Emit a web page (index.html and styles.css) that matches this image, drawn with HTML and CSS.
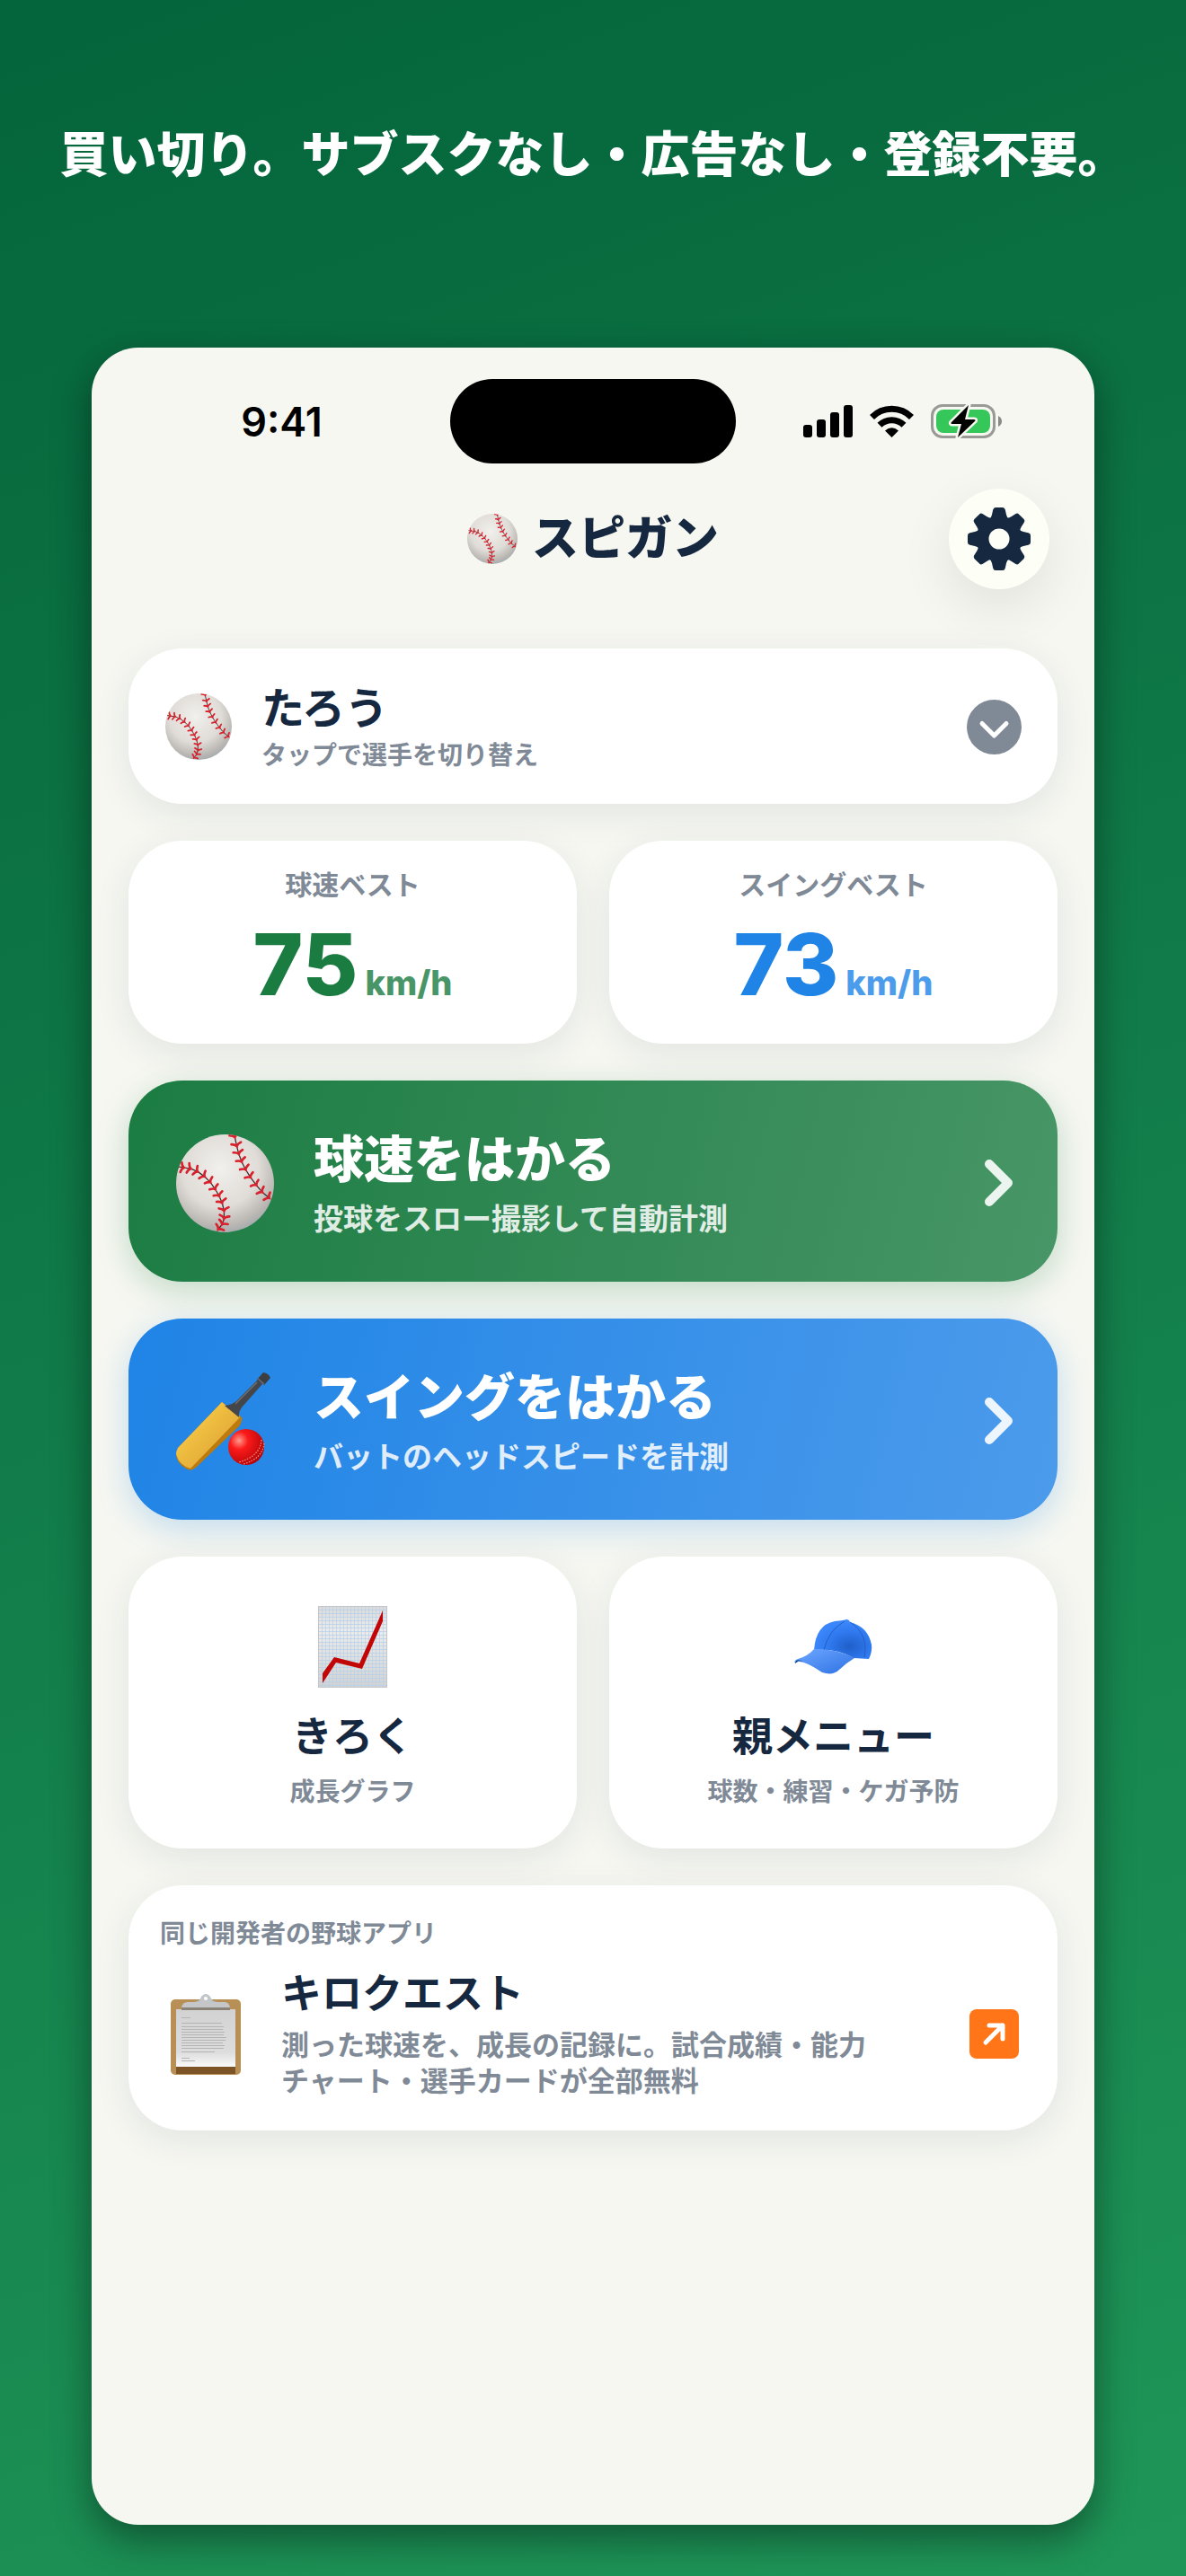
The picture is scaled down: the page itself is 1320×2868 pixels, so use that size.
FILE: index.html
```html
<!DOCTYPE html>
<html lang="ja">
<head>
    <meta charset="UTF-8">
    <meta name="viewport" content="width=device-width, initial-scale=1.0">
    <title>スピガン</title>
    <link rel="stylesheet" href="styles.css">
</head>
<body>
    <!-- Shared icons -->
    <svg class="sprite" width="0" height="0" aria-hidden="true">
        <defs>
            <radialGradient id="ballFill" cx="45%" cy="35%" r="65%">
                <stop offset="0" stop-color="#f1f0ed"/>
                <stop offset="0.6" stop-color="#e0dcd7"/>
                <stop offset="0.88" stop-color="#bdb9b5"/>
                <stop offset="1" stop-color="#a9adae"/>
            </radialGradient>
            <clipPath id="ballClip"><circle cx="50" cy="50" r="50"/></clipPath>
            <marker id="stitch" viewBox="-6 -6 12 12" markerWidth="12" markerHeight="12" markerUnits="userSpaceOnUse" orient="auto" overflow="visible">
                <path d="M-3-5Q-2-1 0 0Q-2 1-3 5" fill="none" stroke="#d9202c" stroke-width="2.4" stroke-linecap="round"/>
            </marker>
        </defs>
        <symbol id="icon-ball" viewBox="0 0 100 100">
            <circle cx="50" cy="50" r="50" fill="url(#ballFill)"/>
            <g clip-path="url(#ballClip)" fill="none" stroke="#3c3030" stroke-width="1.2" marker-start="url(#stitch)" marker-mid="url(#stitch)" marker-end="url(#stitch)">
                <path d="M2 33L8 34L15 35L22 38L29 43L35 49L40 56L44 63L47 70L49 78L49 86L47 92L43 97"/>
                <path d="M60 3L62 12L64 20L67 28L71 36L76 44L82 52L88 59L95 65"/>
            </g>
        </symbol>
        <symbol id="icon-chevron" viewBox="0 0 32 52">
            <path d="M5 5L26 26L5 47" fill="none" stroke="currentColor" stroke-width="10" stroke-linecap="round" stroke-linejoin="round"/>
        </symbol>
    </svg>

    <h1 class="headline">買い切り。サブスクなし・広告なし・登録不要。</h1>

    <main class="phone">
        <!-- Status bar -->
        <div class="status-bar">
            <span class="status-time">9:41</span>
            <span class="island"></span>
            <div class="status-icons">
                <svg width="55" height="36" viewBox="0 0 55 36">
                    <rect x="0" y="22" width="10" height="14" rx="3"/>
                    <rect x="15" y="16" width="10" height="20" rx="3"/>
                    <rect x="30" y="8" width="10" height="28" rx="3"/>
                    <rect x="45" y="0" width="10" height="36" rx="3"/>
                </svg>
                <svg width="49" height="36" viewBox="0 0 49 36">
                    <g fill="none" stroke="#000" stroke-width="7">
                        <path d="M2.500 13.500A31 31 0 0 1 46.500 13.500"/>
                        <path d="M11 22.300A19 19 0 0 1 38 22.300"/>
                    </g>
                    <path d="M17 28.500Q24.500 22 32 28.500L24.500 36Z"/>
                </svg>
                <svg width="80" height="38" viewBox="0 0 80 38">
                    <rect x="1.500" y="1.500" width="69" height="35" rx="11.500" fill="none" stroke="#999a95" stroke-width="3"/>
                    <rect x="6" y="6" width="60" height="26" rx="8" fill="#35c759"/>
                    <path d="M75 13Q79 15 79 19T75 25Z" fill="#8a8b86"/>
                    <path d="M42 1L22.500 20.500Q22 22 24 22H34L30 37L49.500 18.500Q50 17 48 17H38Z" fill="#000" stroke="#f6f7f1" stroke-width="5" paint-order="stroke" stroke-linejoin="round"/>
                </svg>
            </div>
        </div>

        <!-- App header -->
        <header class="app-header">
            <h2 class="app-title">
                <svg class="title-ball" aria-hidden="true"><use href="#icon-ball"/></svg>
                スピガン
            </h2>
            <button class="settings-btn" aria-label="設定">
                <svg width="70" height="70" viewBox="-35 -35 70 70" fill="#16283f">
                    <defs>
                        <path id="tooth" d="M-11-22Q-8.500-24-8-27L-6.800-32.500Q-6.200-35-4-35H4Q6.200-35 6.800-32.500L8-27Q8.500-24 11-22Z"/>
                    </defs>
                    <path fill-rule="evenodd" d="M0-24.500A24.500 24.500 0 1 1 0 24.500A24.500 24.500 0 1 1 0-24.500ZM0-11.500A11.500 11.500 0 1 0 0 11.500A11.500 11.500 0 1 0 0-11.500Z"/>
                    <use href="#tooth"/>
                    <use href="#tooth" transform="rotate(45)"/>
                    <use href="#tooth" transform="rotate(90)"/>
                    <use href="#tooth" transform="rotate(135)"/>
                    <use href="#tooth" transform="rotate(180)"/>
                    <use href="#tooth" transform="rotate(225)"/>
                    <use href="#tooth" transform="rotate(270)"/>
                    <use href="#tooth" transform="rotate(315)"/>
                </svg>
            </button>
        </header>

        <div class="content">
            <!-- Player switcher -->
            <button class="card player-card">
                <svg class="player-ball" aria-hidden="true"><use href="#icon-ball"/></svg>
                <span class="player-text">
                    <span class="player-name">たろう</span>
                    <span class="note">タップで選手を切り替え</span>
                </span>
                <svg width="61" height="61" viewBox="0 0 61 61">
                    <circle cx="30.500" cy="30.500" r="30.500" fill="#808a97"/>
                    <path d="M17 26.500L30.500 40L44 26.500" fill="none" stroke="#fff" stroke-width="5" stroke-linecap="round" stroke-linejoin="round"/>
                </svg>
            </button>

            <!-- Best records -->
            <div class="grid">
                <section class="card stat-card stat-pitch">
                    <h3 class="stat-label">球速ベスト</h3>
                    <p class="stat-value">75<span class="unit">km/h</span></p>
                </section>
                <section class="card stat-card stat-swing">
                    <h3 class="stat-label">スイングベスト</h3>
                    <p class="stat-value">73<span class="unit">km/h</span></p>
                </section>
            </div>

            <!-- Measure actions -->
            <button class="action-card action-pitch">
                <svg class="action-icon" aria-hidden="true"><use href="#icon-ball"/></svg>
                <span class="action-text">
                    <span class="action-title">球速をはかる</span>
                    <span class="action-sub">投球をスロー撮影して自動計測</span>
                </span>
                <svg class="chevron" aria-hidden="true"><use href="#icon-chevron"/></svg>
            </button>
            <button class="action-card action-swing">
                <svg class="action-icon" viewBox="0 0 109 109" aria-hidden="true">
                    <defs>
                        <linearGradient id="bladeFill" x1="0" y1="0" x2="1" y2="1">
                            <stop offset="0.3" stop-color="#f3c544"/>
                            <stop offset="0.62" stop-color="#e6b03a"/>
                            <stop offset="0.75" stop-color="#b87508"/>
                        </linearGradient>
                        <radialGradient id="redBall" cx="30%" cy="32%" r="72%">
                            <stop offset="0" stop-color="#ff9a8c"/>
                            <stop offset="0.35" stop-color="#fb1a1a"/>
                            <stop offset="1" stop-color="#b80608"/>
                        </radialGradient>
                    </defs>
                    <path d="M51 33L73 50Q74 54 71 59L23 105Q17 111 11 107Q2 102 0 93Q0 88 2 84Z" fill="#bd7a0d"/>
                    <path d="M51 33L71 50L16 107Q3 103 0 91Q0 88 2 84Z" fill="url(#bladeFill)"/>
                    <path d="M54 37Q62 36 67 32L91 8L96 13L73 39Q69 44 70 50Z" fill="#45464a"/>
                    <path d="M97 0Q103 1 105 6L98 14L90 8Z" fill="#3d3e41"/>
                    <path d="M91 7L98 13M66 35L90 11" stroke="#6d6e72" stroke-width="1.500"/>
                    <circle cx="78" cy="83" r="20" fill="url(#redBall)"/>
                    <path d="M95 75Q94 93 70 100M98 79Q96 96 75 102" fill="none" stroke="#f5938c" stroke-width="1.200" stroke-dasharray="1.500 1.500"/>
                </svg>
                <span class="action-text">
                    <span class="action-title">スイングをはかる</span>
                    <span class="action-sub">バットのヘッドスピードを計測</span>
                </span>
                <svg class="chevron" aria-hidden="true"><use href="#icon-chevron"/></svg>
            </button>

            <!-- Menu -->
            <div class="grid">
                <button class="card menu-card">
                    <svg width="77" height="91" viewBox="0 0 77 91" aria-hidden="true">
                        <defs>
                            <pattern id="gridLines" width="4" height="4" patternUnits="userSpaceOnUse">
                                <path d="M0 0H4M0 0V4" stroke="#b5d2ea" stroke-width="1.400"/>
                            </pattern>
                            <linearGradient id="sheet" x1="0" y1="0" x2="0" y2="1">
                                <stop offset="0" stop-color="#dadada"/>
                                <stop offset="0.3" stop-color="#ececec"/>
                                <stop offset="1" stop-color="#d2d2d2"/>
                            </linearGradient>
                        </defs>
                        <rect width="77" height="91" fill="url(#sheet)"/>
                        <rect width="77" height="91" fill="url(#gridLines)"/>
                        <rect x="0.500" y="0.500" width="76" height="90" fill="none" stroke="#c3c5c7"/>
                        <path d="M5 75L18 57L46 64L72 5V17L49 70L20 63L5 86Z" fill="#c20505"/>
                    </svg>
                    <span class="menu-title">きろく</span>
                    <span class="note">成長グラフ</span>
                </button>
                <button class="card menu-card">
                    <svg width="87" height="91" viewBox="0 -15 87 91" aria-hidden="true">
                        <defs>
                            <radialGradient id="crown" cx="62%" cy="68%" r="60%">
                                <stop offset="0" stop-color="#1f5fc9"/>
                                <stop offset="0.6" stop-color="#2f78ee"/>
                                <stop offset="1" stop-color="#3b86fa"/>
                            </radialGradient>
                            <linearGradient id="brim" x1="0" y1="0" x2="1" y2="1">
                                <stop offset="0.2" stop-color="#629dfb"/>
                                <stop offset="0.8" stop-color="#3a7ce8"/>
                            </linearGradient>
                        </defs>
                        <path d="M22 34Q24 6 45 2Q56 1 58 0Q61 0 62 3Q82 8 86 28Q87 36 83 44L66 43Q48 32 22 34Z" fill="url(#crown)"/>
                        <path d="M33 34Q38 12 56 2M78 42Q83 16 62 3" fill="none" stroke="#2260c4" stroke-width="1"/>
                        <path d="M22 33Q46 32 67 43Q57 49 50 56Q43 63 31 59Q12 46 4 47L1 49Q-1 46 4 44Q15 41 22 33Z" fill="url(#brim)"/>
                        <path d="M1 49L2 46Q5 44 10 47L5 46Z" fill="#174890"/>
                    </svg>
                    <span class="menu-title">親メニュー</span>
                    <span class="note">球数・練習・ケガ予防</span>
                </button>
            </div>

            <!-- Sister app -->
            <a class="card promo-card" href="#">
                <span class="note">同じ開発者の野球アプリ</span>
                <span class="promo-row">
                    <span class="promo-icon">
                        <svg width="78" height="90" viewBox="0 0 78 90" aria-hidden="true">
                            <defs>
                                <linearGradient id="paper" x1="0" y1="0" x2="0" y2="1">
                                    <stop offset="0" stop-color="#d2d2d2"/>
                                    <stop offset="0.75" stop-color="#dddddd"/>
                                    <stop offset="1" stop-color="#fafafa"/>
                                </linearGradient>
                            </defs>
                            <rect x="0" y="6" width="78" height="84" rx="5" fill="#b88f55"/>
                            <rect x="6" y="80" width="66" height="9" fill="#7c5426"/>
                            <rect x="6" y="17" width="66" height="64" fill="url(#paper)"/>
                            <g stroke="#b4b4b4" stroke-width="1">
                                <path d="M12 26.500H22M12 32.500H57M12 36.500H59M12 39.500H58M12 42.500H60M12 45.500H59M12 48.500H62M12 51.500H61M12 54.500H58M12 57.500H60M12 60.500H59M12 64.500H49M12 71.500H21M12 74.500H27"/>
                            </g>
                            <path d="M26 9Q33 8 34 3Q39-3 44 3Q45 8 52 9Z" fill="#b3bfcb"/>
                            <path d="M12 15Q13 9 19 9H31Q34 7 34 4Q39-3 44 4Q44 7 47 9H60Q65 9 66 15V16H12Z" fill="#c4c6c8"/>
                            <rect x="12" y="15" width="54" height="3" fill="#8b8278"/>
                            <circle cx="39" cy="5" r="2" fill="#fff"/>
                        </svg>
                    </span>
                    <span class="promo-text">
                        <span class="promo-title">キロクエスト</span>
                        <span class="promo-desc">測った球速を、成長の記録に。試合成績・能力<br>チャート・選手カードが全部無料</span>
                    </span>
                    <svg width="55" height="55" viewBox="0 0 55 55" aria-hidden="true">
                        <rect width="55" height="55" rx="8" fill="#ff7518"/>
                        <path d="M18 37L37 18M22 18H37V33" fill="none" stroke="#fff" stroke-width="5" stroke-linecap="round" stroke-linejoin="round"/>
                    </svg>
                </span>
            </a>
        </div>
    </main>
</body>
</html>
```
FILE: styles.css
```css
* {
    margin: 0;
    padding: 0;
    box-sizing: border-box;
}

body {
    display: flex;
    flex-direction: column;
    min-height: 100vh;
    padding: 133px 102px 57px;
    background: linear-gradient(160deg, #04643b 0%, #1f9658 100%);
    color: #16283f;
    font-family: Inter, "Noto Sans CJK JP", sans-serif;
}

button {
    border: none;
    color: inherit;
    font: inherit;
    cursor: pointer;
}

a {
    color: inherit;
    text-decoration: none;
}

svg {
    display: block;
    flex-shrink: 0;
}

.sprite {
    position: absolute;
}

.headline {
    margin: 0 -40px 174px;
    color: #fff;
    font-size: 54px;
    font-weight: 900;
    line-height: 80px;
    text-align: center;
    white-space: nowrap;
}

.phone {
    flex: 1;
    padding-top: 35px;
    background: #f6f7f1;
    border-radius: 52px;
    box-shadow: 0 16px 44px rgba(0, 0, 0, 0.42);
}

/* Status bar */
.status-bar {
    display: grid;
    grid-template-columns: 1fr 318px 1fr;
    align-items: center;
    color: #000;
}

.status-time {
    padding-left: 24px;
    font-size: 45px;
    font-weight: 600;
    text-align: center;
}

.island {
    height: 94px;
    background: #000;
    border-radius: 47px;
}

.status-icons {
    display: flex;
    justify-content: center;
    align-items: center;
    gap: 19px;
    padding-right: 28px;
}

/* App header */
.app-header {
    display: grid;
    grid-template-columns: 1fr auto 1fr;
    align-items: center;
    margin: 28px 50px 66px;
}

.app-title {
    grid-column: 2;
    display: flex;
    align-items: center;
    gap: 16px;
    font-size: 52px;
    font-weight: 800;
    line-height: 76px;
}

.title-ball {
    width: 56px;
    height: 56px;
}

.settings-btn {
    justify-self: end;
    display: flex;
    align-items: center;
    justify-content: center;
    width: 112px;
    height: 112px;
    background: #fdfff7;
    border-radius: 50%;
    box-shadow: 0 20px 60px rgba(0, 0, 0, 0.09);
}

/* Cards */
.content {
    display: flex;
    flex-direction: column;
    gap: 41px;
    padding: 0 41px 41px;
}

.grid {
    display: grid;
    grid-template-columns: 1fr 1fr;
    gap: 36px;
}

.card {
    background: #fff;
    border-radius: 60px;
    box-shadow: 0 10px 40px rgba(22, 40, 63, 0.09);
}

.note {
    color: #808a97;
    font-size: 28px;
    font-weight: 600;
    line-height: 36px;
}

.player-card {
    display: flex;
    align-items: center;
    gap: 33px;
    padding: 37px 40px 36px 41px;
    text-align: left;
}

.player-ball {
    width: 74px;
    height: 74px;
}

.player-text {
    flex: 1;
    display: flex;
    flex-direction: column;
    gap: 4px;
}

.player-name {
    font-size: 48px;
    font-weight: 700;
    line-height: 60px;
}

.stat-card {
    display: flex;
    flex-direction: column;
    align-items: center;
    gap: 21px;
    padding: 29px 20px 40px;
}

.stat-label {
    color: #808a97;
    font-size: 30px;
    font-weight: 600;
    line-height: 40px;
}

.stat-value {
    display: flex;
    align-items: baseline;
    gap: 8px;
    font-size: 95px;
    font-weight: 800;
    line-height: 96px;
}

.unit {
    font-size: 38px;
    font-weight: 800;
    line-height: 40px;
    opacity: 0.8;
}

.stat-pitch .stat-value {
    color: #1b7c42;
}

.stat-swing .stat-value {
    color: #1f84e6;
}

.action-card {
    display: flex;
    align-items: center;
    gap: 44px;
    padding: 54px 49px 50px 53px;
    border-radius: 60px;
    color: #fff;
    text-align: left;
}

.action-pitch {
    background: linear-gradient(105deg, #1b7c42, #489667);
    box-shadow: 0 10px 36px rgba(27, 124, 66, 0.24);
}

.action-swing {
    background: linear-gradient(105deg, #1f84e6, #4c9beb);
    box-shadow: 0 10px 36px rgba(31, 132, 230, 0.24);
}

.action-icon {
    width: 109px;
    height: 109px;
}

.action-text {
    flex: 1;
    display: flex;
    flex-direction: column;
    gap: 12px;
}

.action-title {
    font-size: 56px;
    font-weight: 800;
    line-height: 68px;
}

.action-sub {
    font-size: 33px;
    font-weight: 600;
    line-height: 40px;
    opacity: 0.85;
}

.chevron {
    width: 32px;
    height: 52px;
    opacity: 0.9;
}

.menu-card {
    display: flex;
    flex-direction: column;
    align-items: center;
    padding: 55px 20px 45px;
}

.menu-title {
    margin: 25px 0 13px;
    font-size: 45px;
    font-weight: 700;
    line-height: 60px;
}

/* Sister app link */
.promo-card {
    display: flex;
    flex-direction: column;
    gap: 21px;
    padding: 36px 43px 35px 35px;
}

.promo-row {
    display: flex;
    align-items: center;
    gap: 33px;
}

.promo-icon {
    display: flex;
    justify-content: center;
    width: 102px;
}

.promo-text {
    flex: 1;
    display: flex;
    flex-direction: column;
    gap: 9px;
}

.promo-title {
    font-size: 45px;
    font-weight: 700;
    line-height: 56px;
}

.promo-desc {
    color: #808a97;
    font-size: 31px;
    font-weight: 600;
    line-height: 40px;
}
```
